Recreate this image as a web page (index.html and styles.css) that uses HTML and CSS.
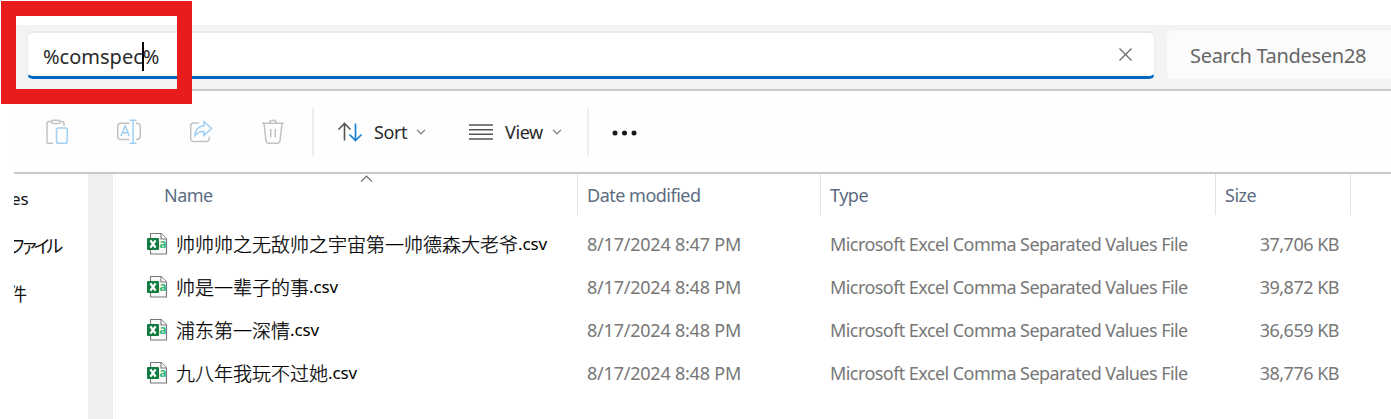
FILE: index.html
```html
<!DOCTYPE html>
<html lang="en">
<head>
<meta charset="utf-8">
<title>File Explorer</title>
<link rel="stylesheet" href="styles.css">
</head>
<body>
<svg class="defs" width="0" height="0">
  <symbol id="csv" viewBox="0 0 22 24">
    <path d="M4.500 1.500h10.500l5.500 5.500v15h-16z" fill="#fafafa" stroke="#777" stroke-width="1.100" stroke-linejoin="round"/>
    <path d="M15 1.500v5.500h5.500" fill="#fff" stroke="#777" stroke-width="1.100"/>
    <rect x="1" y="6" width="12" height="12" rx="1" fill="#107c41"/>
    <path d="M4.400 8.300l5.200 7.400M9.600 8.300l-5.200 7.400" stroke="#fff" stroke-width="2.300"/>
    <text x="13.200" y="15.800" class="csv-a">a</text>
  </symbol>
</svg>
<div class="window">
  <header class="topbar">
    <div class="address"><span class="address-text">%comspec<i class="caret"></i>%</span>
      <svg class="close" width="15" height="15" viewBox="0 0 15 15"><path d="M1.500 1.500l12 12M13.500 1.500l-12 12"/></svg>
    </div>
    <div class="search"><span class="search-text">Search Tandesen28</span></div>
  </header>
  <nav class="toolbar">
    <div class="disabled">
      <svg width="26" height="26" viewBox="0 0 26 26"><path class="g" d="M8 2.500H5Q3 2.500 3 4.500V22.500Q3 24.300 5 24.300H9M16 2.500H18Q20 2.500 20 4.500V7"/><rect class="g" x="7.700" y="1.200" width="8.300" height="3.300" rx="1.600"/><rect class="b" x="12.500" y="9" width="10.700" height="15.300" rx="1.800"/></svg>
      <svg width="26" height="26" viewBox="0 0 26 26"><path class="g" d="M13.500 4.200H5Q1.700 4.200 1.700 7.500V17.200Q1.700 20.500 5 20.500H13.500M20 4.200Q24.300 4.200 24.300 8V16.700Q24.300 20.500 20 20.500"/><path class="b" d="M5 17L9.200 7L13.400 17M6.500 13.700H12M13.500 1.200H20.500M17 1.200V24.300M13.500 24.300H20.500"/></svg>
      <svg width="26" height="26" viewBox="0 0 26 26"><path class="g" d="M11 4H6Q2.700 4 2.700 7.300V19.200Q2.700 22.500 6 22.500H18Q21.300 22.500 21.300 19.200V17.500"/><path class="b" d="M16 2.700L23.500 9.500L16 16.500V12.500Q10 12.300 6.700 16.700Q7.500 7.500 16 6.700Z"/></svg>
      <svg width="26" height="26" viewBox="0 0 26 26"><path class="g" d="M2 4.300H24M9.500 4.300Q9.500 1.200 13 1.200T16.500 4.300M4 4.300L6 21.500Q6.300 24.300 9 24.300H17Q19.700 24.300 20 21.500L22 4.300M10.700 10V18.500M15.300 10V18.500"/></svg>
    </div>
    <div class="menus">
      <div class="menu"><svg width="26" height="20" viewBox="0 0 26 20"><path class="d" d="M7.500 18.500V2M1.500 7.500L7.500 1.500L13.500 7.500"/><path class="blue" d="M18.500 1.500V18M12.500 12.500L18.500 18.500L24.500 12.500"/></svg><span class="sort">Sort</span><svg class="chev" width="10" height="6" viewBox="0 0 10 6"><path d="M1 .8L5 4.800L9 .8"/></svg></div>
      <div class="menu view-menu"><svg width="24" height="18" viewBox="0 0 24 18"><path class="d" d="M0 2H24M0 6.700H24M0 11.300H24M0 16H24"/></svg><span class="view">View</span><svg class="chev" width="10" height="6" viewBox="0 0 10 6"><path d="M1 .8L5 4.800L9 .8"/></svg></div>
    </div>
    <svg class="more" width="26" height="6" viewBox="0 0 26 6"><circle cx="3" cy="3" r="2.500"/><circle cx="12.500" cy="3" r="2.500"/><circle cx="22" cy="3" r="2.500"/></svg>
  </nav>
  <main class="content">
    <aside class="side"><div class="side-latin">es</div><div class="side-jp">ファイル</div><div class="side-cn"><span>件</span></div></aside>
    <div class="scroll"></div>
    <section class="files">
      <div class="head">
        <div class="h-name"><span>Name</span><svg class="up" width="13" height="8" viewBox="0 0 13 8"><path d="M1 6.500L6.500 1.200L12 6.500"/></svg></div>
        <div class="h-date"><span>Date modified</span></div><div class="h-type"><span>Type</span></div><div class="h-size"><span>Size</span></div>
      </div>
      <div class="row"><div class="name"><svg width="22" height="24"><use href="#csv"/></svg><span class="cjk">帅帅帅之无敌帅之宇宙第一帅德森大老爷</span><span class="ext">.csv</span></div><span class="date">8/17/2024 8:47 PM</span><span class="type">Microsoft Excel Comma Separated Values File</span><span class="size">37,706 KB</span></div>
      <div class="row"><div class="name"><svg width="22" height="24"><use href="#csv"/></svg><span class="cjk">帅是一辈子的事</span><span class="ext">.csv</span></div><span class="date">8/17/2024 8:48 PM</span><span class="type">Microsoft Excel Comma Separated Values File</span><span class="size">39,872 KB</span></div>
      <div class="row"><div class="name"><svg width="22" height="24"><use href="#csv"/></svg><span class="cjk">浦东第一深情</span><span class="ext">.csv</span></div><span class="date">8/17/2024 8:48 PM</span><span class="type">Microsoft Excel Comma Separated Values File</span><span class="size">36,659 KB</span></div>
      <div class="row"><div class="name"><svg width="22" height="24"><use href="#csv"/></svg><span class="cjk">九八年我玩不过她</span><span class="ext">.csv</span></div><span class="date">8/17/2024 8:48 PM</span><span class="type">Microsoft Excel Comma Separated Values File</span><span class="size">38,776 KB</span></div>
    </section>
  </main>
</div>
<div class="highlight"></div>
</body>
</html>
```
FILE: styles.css
```css
* { box-sizing: border-box; }
body { margin: 0; background: #fff; overflow: hidden; font: 17px/24px "Noto Sans", "Noto Sans CJK SC", sans-serif; }
svg { display: block; flex: none; fill: none; }
.defs { position: absolute; }
.window { height: 419px; padding: 25px 0 0 14px; display: flex; flex-direction: column; }
.topbar { height: 66px; flex: none; display: flex; gap: 12px; padding: 5px 0 0 13px; background: #f3f3f3; border-bottom: 2px solid #c8c8c8; }
.address { width: 1128px; height: 48px; margin-top: 1px; flex: none; display: flex; align-items: center; justify-content: space-between; padding: 0 21px 0 15px; background: #fff; border: 1px solid #ebebeb; border-top-width: 2px; border-bottom: 3px solid #0067c0; border-radius: 6px; color: #2a2a2a; }
.address-text { font-size: 20px; letter-spacing: 0; padding-top: 3px; }
.caret { display: inline-block; width: 2px; height: 29px; background: #000; margin: 0 -1px; vertical-align: -7px; }
.close path { stroke: #666; stroke-width: 1.2; }
.search { flex: 1; height: 49px; background: #fbfbfb; border-radius: 6px 0 0 6px; padding: 14px 0 0 23px; color: #666; white-space: nowrap; }
.search-text { font-size: 20px; letter-spacing: -.3px; }
.toolbar { height: 83px; flex: none; display: flex; align-items: center; border-bottom: 2px solid #c8c8c8; background: #fefefe; }
.disabled { display: flex; gap: 46px; width: 298px; padding-left: 30px; }
.g { stroke: #c2c2c2; stroke-width: 1.5; }
.b { stroke: #9fcff3; stroke-width: 1.5; }
.d { stroke: #555; stroke-width: 1.6; }
.blue { stroke: #1683d8; stroke-width: 1.7; }
.menus { height: 48px; width: 277px; border-left: 2px solid #ededed; border-right: 2px solid #ededed; display: flex; align-items: center; padding-left: 23px; }
.menu { display: flex; align-items: center; color: #2a2a2a; }
.sort, .view { font-size: 18px; margin-left: 11px; width: 32px; white-space: nowrap; letter-spacing: -.4px; }
.view { margin-left: 12px; width: 39px; }
.view-menu { margin-left: 43px; }
.chev { margin-left: 10px; }
.view-menu .chev { margin-left: 8px; }
.chev path, .up path { stroke: #777; stroke-width: 1.2; }
.more { margin: 2px 0 0 23px; fill: #1a1a1a; }
.content { display: flex; flex: 1; min-height: 0; }
.side { width: 74px; overflow: hidden; color: #111; padding-top: 13px; flex: none; }
.side-latin { height: 46px; margin-left: -3px; }
.side-jp { font-family: "Noto Sans CJK JP", sans-serif; font-size: 18px; letter-spacing: -5.5px; height: 48px; margin-left: -6px; }
.side-cn { font-family: "Noto Sans CJK SC", sans-serif; font-size: 18px; margin-left: -5px; }
.scroll { width: 28px; background: linear-gradient(to right, #efefef 25px, #fff 25px 27px, #f6f6f6 27px); flex: none; }
.files { flex: 1; }
.head { display: flex; height: 41px; margin-bottom: 8px; color: #5c6c82; font-size: 18px; letter-spacing: -.5px; }
.head > div { border-right: 1px solid #e2e2e2; padding: 9px 0 0 9px; }
.head .h-name { width: 462px; padding: 1px 0 0 48px; display: grid; grid-template-columns: 196px 13px; align-items: start; }
.h-name span { padding-top: 8px; }
.h-date { width: 243px; }
.h-type { width: 395px; }
.h-size { width: 135px; }
.row { height: 43px; display: grid; grid-template-columns: 471px 243px 385px 124px; align-items: center; color: #777; font-size: 18px; white-space: nowrap; }
.row > span { padding-bottom: 2px; }
.name { display: flex; align-items: center; padding: 0 0 2px 30px; color: #000; font-size: 17px; }
.name svg { margin-right: 8px; }
.cjk { font-family: "Noto Sans CJK SC", sans-serif; font-weight: 300; font-size: 19px; -webkit-text-stroke: .25px #000; }
.ext { letter-spacing: -.1px; padding-top: 1px; }
.date { letter-spacing: -.22px; }
.type { letter-spacing: -.56px; }
.size { text-align: right; letter-spacing: -.5px; }
.csv-a { font: bold 12px "Noto Sans", sans-serif; fill: #35b978; }
.highlight { position: absolute; left: 1px; top: 1px; width: 191px; height: 103px; border: 15px solid #e71d1d; }
```
